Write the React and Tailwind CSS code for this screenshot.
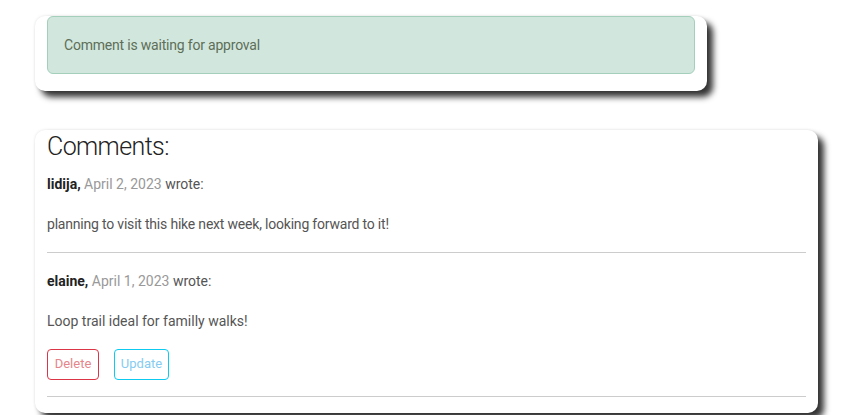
export default function App() {
  const font = { fontFamily: 'Roboto, "Liberation Sans", Arial, sans-serif' };
  return (
    <div className="min-h-[415px] bg-white pt-4 pl-[35px]" style={font}>
      <div className="w-[672px] rounded-[10px] bg-white px-3 shadow-[6px_6px_6px_rgba(0,0,0,0.8),0_0_3px_rgba(0,0,0,0.12)]">
        <div className="mb-4 rounded-md border border-[#a3cfbb] bg-[#d1e7dd] p-4 text-[14px] leading-6 tracking-[-0.2px] text-[#5e6e58]">
          Comment is waiting for approval
        </div>
        <div className="h-px" />
      </div>

      <div className="mt-[39px] w-[783px] rounded-[10px] bg-white px-3 shadow-[6px_6px_6px_rgba(0,0,0,0.8),0_0_3px_rgba(0,0,0,0.12)]">
        <h3 className="mb-2 text-[25px] font-light leading-[33.6px] tracking-[-0.6px] text-[#222]">Comments:</h3>

        <p className="mb-4 text-[14px] leading-6 text-[#555]">
          <span className="font-bold text-[#222]">lidija,</span>{" "}
          <span className="text-[#999]">April 2, 2023</span> wrote:
        </p>
        <p className="mb-4 text-[14px] leading-6 tracking-[-0.2px] text-[#555]">
          planning to visit this hike next week, looking forward to it!
        </p>
        <hr className="my-4 border-t border-[#ccc]" />

        <p className="mb-4 text-[14px] leading-6 text-[#555]">
          <span className="font-bold text-[#222]">elaine,</span>{" "}
          <span className="text-[#999]">April 1, 2023</span> wrote:
        </p>
        <p className="mb-4 text-[14px] leading-6 text-[#555]">Loop trail ideal for familly walks!</p>

        <div className="flex gap-[15px]">
          <button className="h-[31px] w-[52px] rounded border border-[#dc3545] text-[13px] text-[#e5868b]">Delete</button>
          <button className="h-[31px] w-[55px] rounded border border-[#0dcaf0] text-[13px] text-[#86ccf2]">Update</button>
        </div>
        <hr className="mt-4 border-t border-[#ccc] pb-4" />
      </div>
    </div>
  );
}
